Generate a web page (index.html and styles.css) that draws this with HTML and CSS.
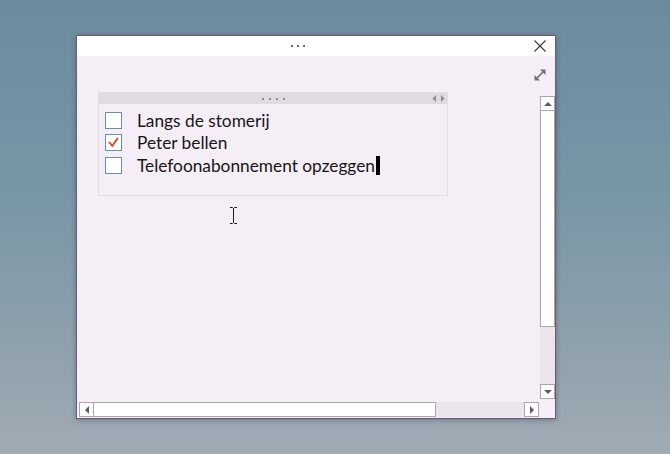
FILE: index.html
```html
<!DOCTYPE html>
<html lang="nl">
<head>
<meta charset="utf-8">
<title>Notitie</title>
<link rel="stylesheet" href="styles.css">
</head>
<body>
<div class="desktop">
  <div class="window">
    <div class="titlebar">
      <div class="grip"><span></span><span></span><span></span></div>
      <div class="close">
        <svg width="12" height="12" viewBox="0 0 12 12"><path d="M0.5 0.5 L11.5 11.5 M11.5 0.5 L0.5 11.5" stroke="#3a3a3a" stroke-width="1.1" fill="none"/></svg>
      </div>
    </div>
    <div class="body">
      <div class="canvas">
        <div class="note">
          <div class="note-head">
            <div class="dots4"><span></span><span></span><span></span><span></span></div>
            <div class="arrows">
              <svg width="13" height="7" viewBox="0 0 13 7"><path d="M4 0 L0.5 3.5 L4 7 Z M9 0 L12.5 3.5 L9 7 Z" fill="#8a8a8a"/></svg>
            </div>
          </div>
          <ul class="todo">
            <li><span class="box"></span><span class="label">Langs de stomerij</span></li>
            <li><span class="box checked"><svg width="15" height="15" viewBox="0 0 15 15"><path d="M3.5 7.5 L6.3 11 L11.5 3.5" stroke="#cf4a27" stroke-width="1.9" fill="none" stroke-linecap="round" stroke-linejoin="round"/></svg></span><span class="label">Peter bellen</span></li>
            <li><span class="box"></span><span class="label">Telefoonabonnement opzeggen</span><span class="caret"></span></li>
          </ul>
        </div>
        <svg class="ibeam" width="9" height="17" viewBox="0 0 9 17"><path d="M1 0.5 H3.5 L4.5 1.5 L5.5 0.5 H8 M4.5 1.5 V15.5 M1 16.5 H3.5 L4.5 15.5 L5.5 16.5 H8" stroke="#1a1a1a" stroke-width="1" fill="none"/></svg>
      </div>
      <div class="expand">
        <svg width="12" height="12" viewBox="0 0 12 12"><path d="M3 9 L9 3" stroke="#707070" stroke-width="1.6"/><path d="M11.5 0.5 L11.5 6 L6 0.5 Z M0.5 11.5 L0.5 6 L6 11.5 Z" fill="#707070"/></svg>
      </div>
      <div class="vbar">
        <div class="sb-btn"><span class="tri up"></span></div>
        <div class="thumb"></div>
        <div class="track"></div>
        <div class="sb-btn"><span class="tri down"></span></div>
      </div>
      <div class="hbar">
        <div class="sb-btn"><span class="tri left"></span></div>
        <div class="thumb"></div>
        <div class="track"></div>
        <div class="sb-btn"><span class="tri right"></span></div>
      </div>
    </div>
  </div>
</div>
</body>
</html>
```
FILE: styles.css
```css
html, body {
  margin: 0;
  padding: 0;
}
body {
  width: 670px;
  height: 454px;
  overflow: hidden;
  font-family: Lato, "Open Sans", sans-serif;
}
.desktop {
  position: relative;
  width: 670px;
  height: 454px;
  background: linear-gradient(180deg, #6a8c9e 0%, #7795a5 40%, #8ea0ac 75%, #a0abb4 100%);
}
.window {
  position: absolute;
  left: 76px;
  top: 35px;
  width: 478px;
  height: 382px;
  border: 1px solid #6e5779;
  background: #f6eef6;
  box-shadow: 0 1px 5px rgba(30, 30, 40, 0.35);
  display: flex;
  flex-direction: column;
}
.titlebar {
  height: 20px;
  background: #ffffff;
  display: flex;
  align-items: center;
}
.grip {
  flex: 1;
  display: flex;
  justify-content: center;
  gap: 4px;
  padding-right: 7px;
}
.grip span {
  width: 2px;
  height: 2px;
  background: #6a6a6a;
}
.close {
  width: 30px;
  height: 20px;
  display: flex;
  align-items: center;
  justify-content: center;
}
.body {
  flex: 1;
  display: grid;
  grid-template-columns: 1fr 15px;
  grid-template-rows: 40px 303px 3px 15px 1fr;
}
.canvas {
  grid-column: 1;
  grid-row: 1 / 4;
  position: relative;
  padding: 36px 0 0 21px;
}
.expand {
  grid-column: 1 / 3;
  grid-row: 1;
  justify-self: end;
  align-self: start;
  margin: 13px 9px 0 0;
  width: 12px;
  height: 12px;
}
.expand svg {
  display: block;
}
.note {
  width: 348px;
  border: 1px solid #e3dde3;
  background: #f6eef6;
}
.note-head {
  height: 11px;
  background: #dedcde;
  display: grid;
  grid-template-columns: 1fr auto 1fr;
  align-items: center;
}
.dots4 {
  grid-column: 2;
  display: flex;
  gap: 5px;
}
.dots4 span {
  width: 2px;
  height: 2px;
  background: #8c8c8c;
}
.arrows {
  grid-column: 3;
  justify-self: end;
  margin-right: 2px;
  height: 7px;
}
.arrows svg {
  display: block;
}
.todo {
  list-style: none;
  margin: 0;
  padding: 5px 0 18px 6px;
}
.todo li {
  height: 22.5px;
  display: flex;
  align-items: center;
  font-size: 17.3px;
  color: #161616;
}
.box {
  width: 15px;
  height: 15px;
  border: 1px solid #6a8db3;
  background: #ffffff;
  margin-right: 15px;
  flex: none;
}
.box svg {
  display: block;
}
.label {
  white-space: nowrap;
}
.caret {
  width: 4px;
  height: 19px;
  background: #000000;
  margin-left: 1px;
}
.ibeam {
  position: absolute;
  left: 152px;
  top: 151px;
}
.vbar {
  grid-column: 2;
  grid-row: 2;
  display: flex;
  flex-direction: column;
}
.hbar {
  grid-column: 1 / 3;
  grid-row: 4;
  display: flex;
  margin: 0 16px 0 2px;
}
.sb-btn {
  width: 13px;
  height: 13px;
  flex: none;
  border: 1px solid #a8a8a8;
  background: #ffffff;
  display: flex;
  align-items: center;
  justify-content: center;
}
.vbar .thumb {
  flex: 0 0 215px;
  border: 1px solid #a8a8a8;
  border-top: none;
  background: #ffffff;
}
.vbar .track {
  flex: 1;
  background: #ebe4eb;
}
.hbar .thumb {
  flex: 0 0 341px;
  border: 1px solid #a8a8a8;
  border-left: none;
  background: #ffffff;
}
.hbar .track {
  flex: 1;
  background: #ebe4eb;
}
.tri {
  width: 0;
  height: 0;
}
.tri.up {
  border-left: 4px solid transparent;
  border-right: 4px solid transparent;
  border-bottom: 4px solid #5e5e5e;
}
.tri.down {
  border-left: 4px solid transparent;
  border-right: 4px solid transparent;
  border-top: 4px solid #5e5e5e;
}
.tri.left {
  border-top: 4px solid transparent;
  border-bottom: 4px solid transparent;
  border-right: 4px solid #5e5e5e;
}
.tri.right {
  border-top: 4px solid transparent;
  border-bottom: 4px solid transparent;
  border-left: 4px solid #5e5e5e;
}
```
